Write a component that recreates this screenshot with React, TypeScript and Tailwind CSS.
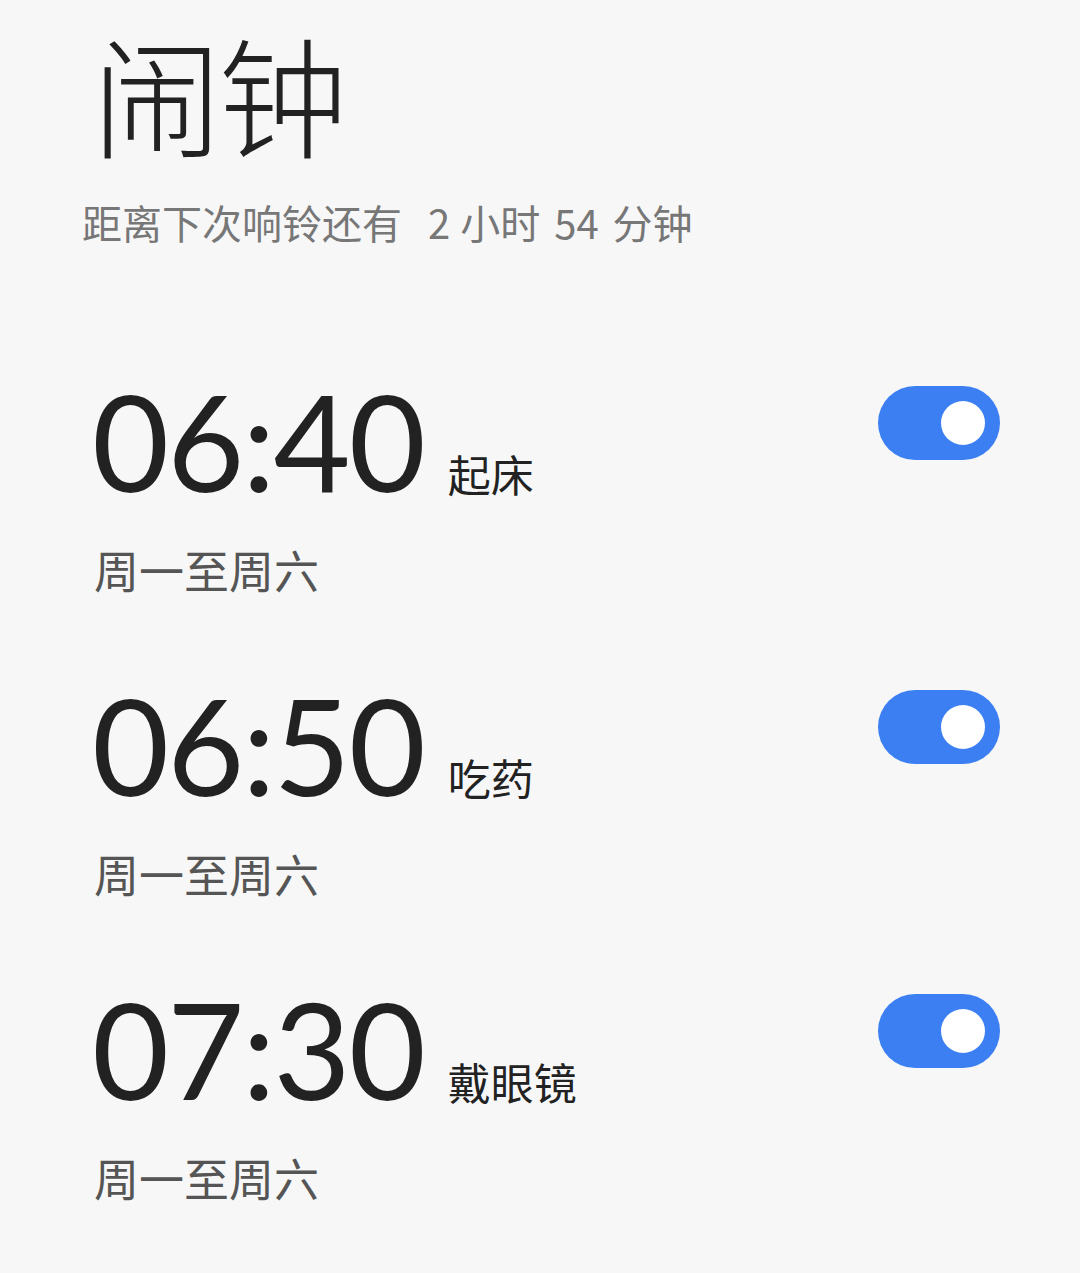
import React from 'react';

const alarms = [
  { time: '06:40', label: '起床', days: '周一至周六' },
  { time: '06:50', label: '吃药', days: '周一至周六' },
  { time: '07:30', label: '戴眼镜', days: '周一至周六' },
];

const cjk = { fontFamily: '"Noto Sans CJK SC", "Noto Sans", sans-serif' };

function Toggle() {
  return (
    <div className="mt-[12px] flex h-[74px] w-[122px] items-center justify-end rounded-full bg-[#3b7ff3] pr-[15px]">
      <div className="h-[44px] w-[44px] rounded-full bg-white" />
    </div>
  );
}

export default function App() {
  return (
    <div className="min-h-[1273px] w-[1080px] bg-[#f7f7f7]" style={cjk}>
      <div className="pl-[82px] pt-[20px]">
        <h1 className="pl-[10px] text-[130px] font-light leading-[1.1] tracking-[-4px] text-[#222]">闹钟</h1>
        <p className="mt-[39px] flex text-[40px] leading-none text-[#777]">
          <span>距离下次响铃还有</span>
          <span className="ml-[26px]">2</span>
          <span className="ml-[10px]">小时</span>
          <span className="ml-[14px]">54</span>
          <span className="ml-[14px]">分钟</span>
        </p>
      </div>

      <div className="mt-[132px] flex flex-col">
        {alarms.map((a) => (
          <div key={a.time} className="flex h-[304px] items-start justify-between pl-[92px] pr-[80px]">
            <div className="flex flex-col">
              <div className="flex items-baseline">
                <span
                  className="text-[133px] leading-[1] tracking-[-2px] text-[#222]"
                  style={{ fontFamily: 'Lato, "Noto Sans", sans-serif' }}
                >
                  {a.time}
                </span>
                <span className="ml-[24px] text-[43px] text-[#222]">{a.label}</span>
              </div>
              <span className="mt-[40px] pl-[2px] text-[45px] leading-none text-[#555]">{a.days}</span>
            </div>
            <Toggle />
          </div>
        ))}
      </div>
    </div>
  );
}
